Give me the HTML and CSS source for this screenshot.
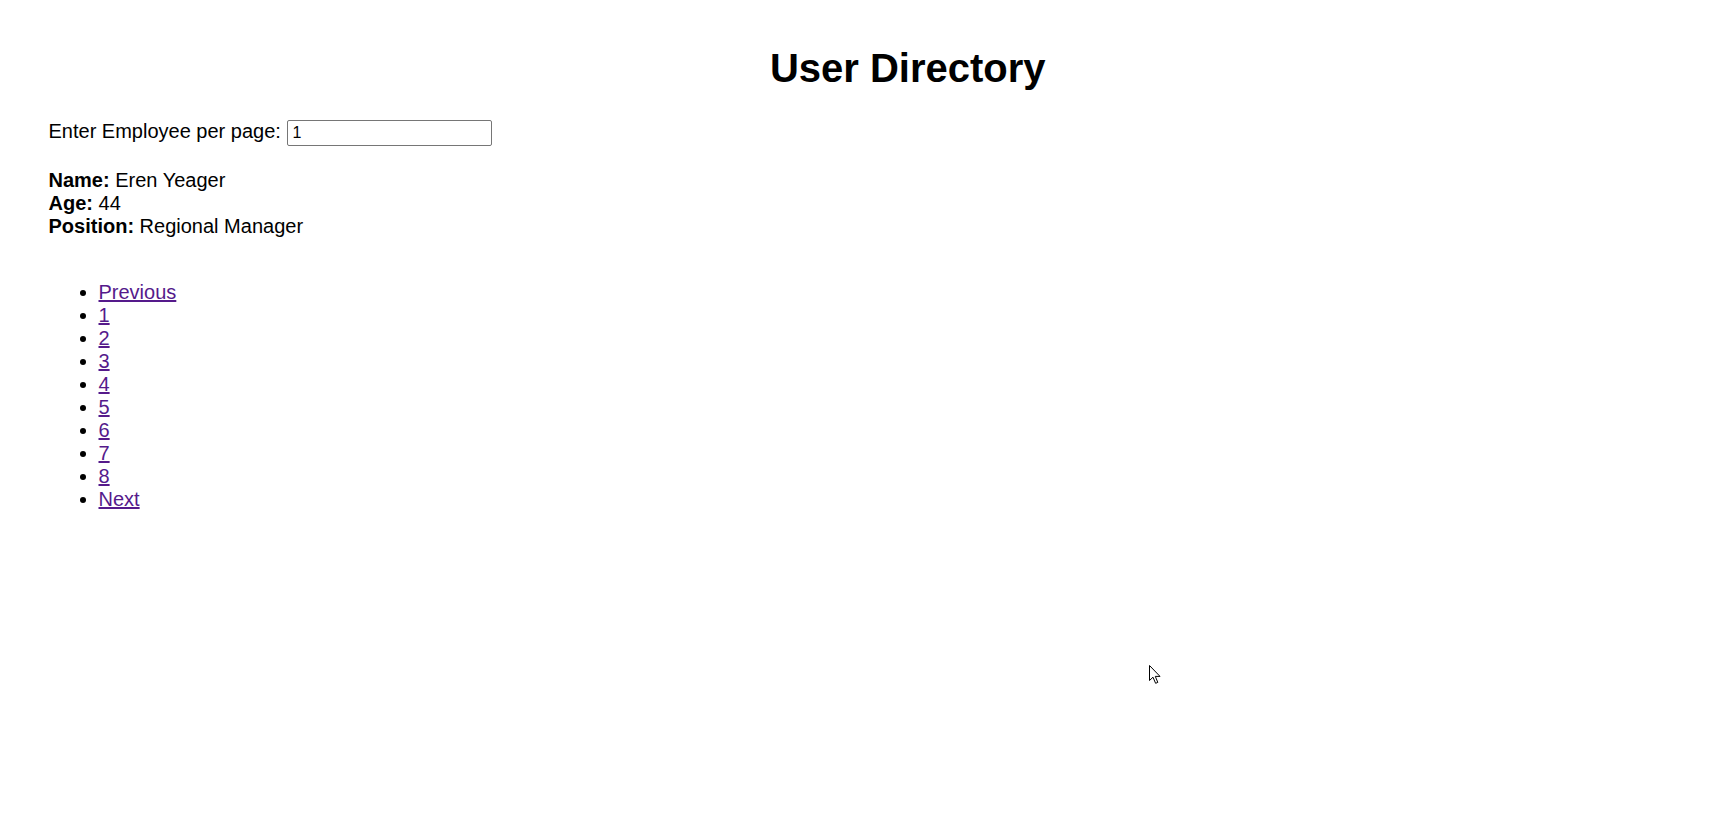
FILE: index.html
```html
<!DOCTYPE html>
<html lang="en">
<head>
<meta charset="utf-8">
<title>User Directory</title>
<link rel="stylesheet" href="styles.css">
</head>
<body>
<div class="page">
  <h1 class="title">User Directory</h1>
  <div class="controls">
    <label class="controls-label" for="perPage">Enter Employee per page:</label>
    <input class="controls-input" id="perPage" type="text" value="1">
  </div>
  <div class="employee">
    <div class="employee-line"><b>Name:</b> Eren Yeager</div>
    <div class="employee-line"><b>Age:</b> 44</div>
    <div class="employee-line"><b>Position:</b> Regional Manager</div>
  </div>
  <ul class="pager">
    <li><a href="#" class="pager-link">Previous</a></li>
    <li><a href="#" class="pager-link">1</a></li>
    <li><a href="#" class="pager-link">2</a></li>
    <li><a href="#" class="pager-link">3</a></li>
    <li><a href="#" class="pager-link">4</a></li>
    <li><a href="#" class="pager-link">5</a></li>
    <li><a href="#" class="pager-link">6</a></li>
    <li><a href="#" class="pager-link">7</a></li>
    <li><a href="#" class="pager-link">8</a></li>
    <li><a href="#" class="pager-link">Next</a></li>
  </ul>
</div>
<svg class="cursor" width="14" height="21" viewBox="0 0 14 21" aria-hidden="true">
  <path d="M0.5 0.5 L0.5 15.5 L4 12.2 L6.6 18.3 L8.8 17.4 L6.3 11.4 L11 11.4 Z" fill="#fff" stroke="#000" stroke-width="1" stroke-linejoin="miter"/>
</svg>
</body>
</html>
```
FILE: styles.css
```css
html, body {
  margin: 0;
  padding: 0;
  background: #ffffff;
}

body {
  font-family: "Liberation Sans", Arial, sans-serif;
  font-size: 20px;
  line-height: 23px;
  color: #000000;
  width: 1730px;
  height: 838px;
  position: relative;
  overflow: hidden;
}

.page {
  padding: 45px 0 0 48.5px;
}

.title {
  margin: 0;
  font-size: 40px;
  line-height: 46px;
  font-weight: bold;
  text-align: center;
  padding-left: 37px;
}

.controls {
  margin-top: 28.5px;
  display: flex;
  align-items: flex-start;
  gap: 6px;
}

.controls-label {
  line-height: 23px;
  padding-top: 0.5px;
}

.controls-input {
  box-sizing: border-box;
  width: 205px;
  height: 26px;
  margin: 0;
  padding: 1px 4.5px;
  border: 1px solid #767676;
  border-radius: 2px;
  font-family: "Liberation Sans", Arial, sans-serif;
  font-size: 16px;
  color: #000000;
  background: #ffffff;
  outline: none;
}

.employee {
  margin-top: 23.5px;
}

.employee-line {
  line-height: 23px;
}

.pager {
  margin: 43px 0 0 0;
  padding-left: 50px;
  list-style: disc;
}

.pager li {
  line-height: 23px;
}

.pager-link {
  color: #551a8b;
  text-decoration: underline;
}

.cursor {
  position: absolute;
  left: 1148.5px;
  top: 664.5px;
}
```
